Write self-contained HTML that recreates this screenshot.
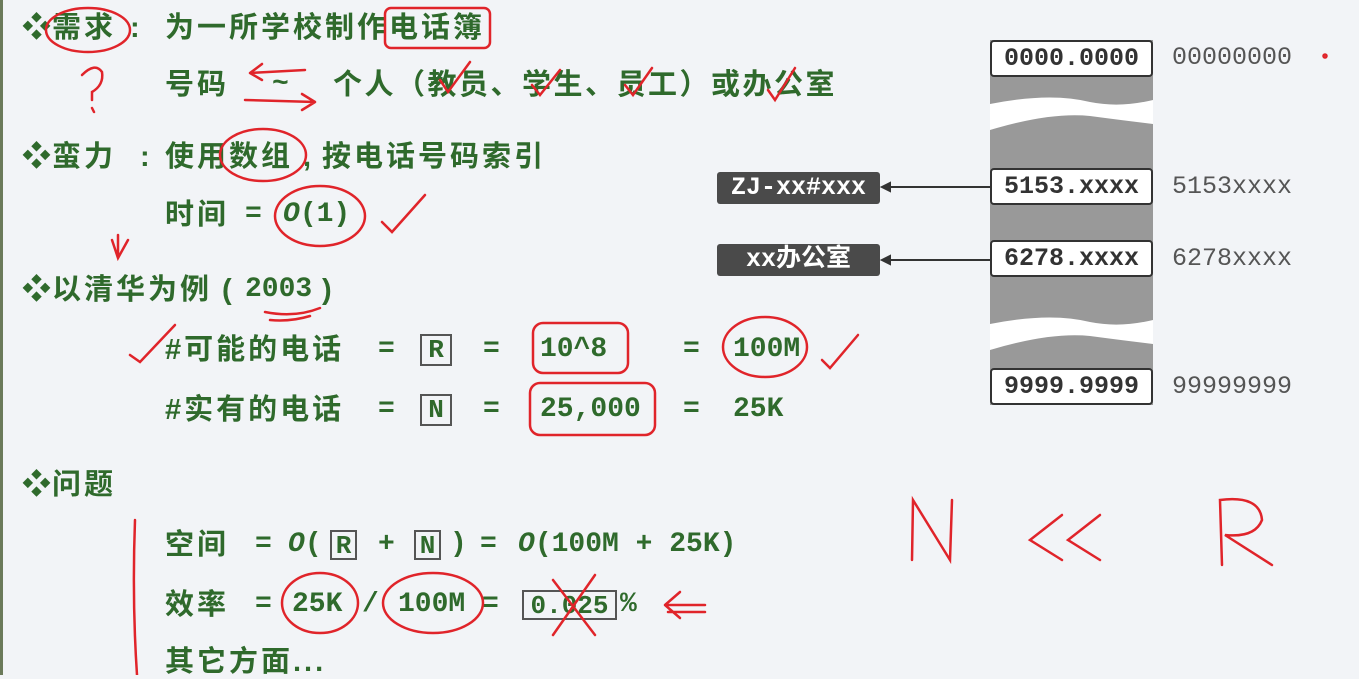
<!DOCTYPE html>
<html><head><meta charset="utf-8"><style>
body{margin:0;width:1359px;height:675px;background:#f2f4f7;position:relative;overflow:hidden;font-family:"Liberation Sans","Noto Sans CJK SC",sans-serif;}
.c,.m{position:absolute;color:#2f6a2c;font-weight:bold;white-space:nowrap;line-height:34px}
.c{font-family:"Liberation Sans","Noto Sans CJK SC",sans-serif;font-size:29px;letter-spacing:3px}
.m{font-family:"Liberation Mono",monospace;font-size:28px}
.bx{position:absolute;border:2px solid #555;box-sizing:border-box;color:#2f6a2c;font:bold 26px/28px "Liberation Mono",monospace;text-align:center}
.cell{position:absolute;left:990px;width:159px;height:33px;background:#fff;border:2px solid #333;border-radius:4px;font:bold 25px/33px "Liberation Mono",monospace;color:#333;text-align:center}
.num{position:absolute;left:1172px;font:25px/30px "Liberation Mono",monospace;color:#555}
.lab{position:absolute;left:717px;width:163px;height:32px;background:#4a4a4a;color:#fff;border-radius:3px;font:bold 25px/32px "Liberation Mono","Noto Sans CJK SC",monospace;text-align:center}
</style></head><body>
<div style="position:absolute;left:0;top:0;width:3px;height:675px;background:#6b7a5a"></div>
<div style="position:absolute;left:990px;top:40px;width:163px;height:365px;background:#999"></div>
<svg style="position:absolute;left:990px;top:90px" width="163" height="270"><path d="M0 14 Q60 2 100 12 Q130 18 163 10 L163 34 Q130 30 100 26 Q60 22 0 40Z" fill="#fff"/><path d="M0 234 Q60 222 100 232 Q130 238 163 230 L163 254 Q130 250 100 246 Q60 242 0 260Z" fill="#fff"/></svg>
<div class="cell" style="top:40px">0000.0000</div>
<div class="cell" style="top:168px">5153.xxxx</div>
<div class="cell" style="top:240px">6278.xxxx</div>
<div class="cell" style="top:368px">9999.9999</div>
<div class="num" style="top:43px">00000000</div>
<div class="num" style="top:172px">5153xxxx</div>
<div class="num" style="top:244px">6278xxxx</div>
<div class="num" style="top:372px">99999999</div>
<div class="lab" style="top:172px">ZJ-xx#xxx</div>
<div class="lab" style="top:244px">xx办公室</div>
<svg style="position:absolute;left:880px;top:175px" width="112" height="100"><g stroke="#333" stroke-width="2" fill="#333"><line x1="4" y1="12" x2="110" y2="12"/><path d="M2 12 L10 8 L10 16Z"/><line x1="4" y1="85" x2="110" y2="85"/><path d="M2 85 L10 81 L10 89Z"/></g></svg>

<div class="c" style="left:22px;top:11px">❖</div><div class="c" style="left:52px;top:11px">需求</div><div class="c" style="left:130px;top:11px">:</div>
<div class="c" style="left:165px;top:11px">为一所学校制作电话簿</div>
<div class="c" style="left:165px;top:68px">号码</div><div class="m" style="left:272px;top:68px">~</div>
<div class="c" style="left:333px;top:68px;letter-spacing:2.5px">个人（教员、学生、员工）或办公室</div>
<div class="c" style="left:22px;top:140px">❖</div><div class="c" style="left:52px;top:140px">蛮力</div><div class="c" style="left:140px;top:140px">:</div>
<div class="c" style="left:165px;top:140px">使用数组</div><div class="c" style="left:303px;top:140px">,</div><div class="c" style="left:322px;top:140px">按电话号码索引</div>
<div class="c" style="left:165px;top:198px">时间</div><div class="m" style="left:245px;top:198px">=</div><div class="m" style="left:283px;top:198px"><i>O</i>(1)</div>
<div class="c" style="left:22px;top:273px">❖</div><div class="c" style="left:52px;top:273px">以清华为例</div><div class="c" style="left:222px;top:273px">(</div><div class="m" style="left:245px;top:273px">2003</div><div class="c" style="left:322px;top:273px">)</div>
<div class="c" style="left:165px;top:333px">#可能的电话</div><div class="m" style="left:378px;top:333px">=</div><div class="bx" style="left:420px;top:334px;width:32px;height:32px">R</div><div class="m" style="left:483px;top:333px">=</div><div class="m" style="left:540px;top:333px">10^8</div><div class="m" style="left:683px;top:333px">=</div><div class="m" style="left:733px;top:333px">100M</div>
<div class="c" style="left:165px;top:393px">#实有的电话</div><div class="m" style="left:378px;top:393px">=</div><div class="bx" style="left:420px;top:394px;width:32px;height:32px">N</div><div class="m" style="left:483px;top:393px">=</div><div class="m" style="left:540px;top:393px">25,000</div><div class="m" style="left:683px;top:393px">=</div><div class="m" style="left:733px;top:393px">25K</div>
<div class="c" style="left:22px;top:468px">❖</div><div class="c" style="left:52px;top:468px">问题</div>
<div class="c" style="left:165px;top:528px">空间</div><div class="m" style="left:255px;top:528px">=</div><div class="m" style="left:288px;top:528px"><i>O</i>(</div><div class="bx" style="left:330px;top:530px;width:27px;height:30px">R</div><div class="m" style="left:378px;top:528px">+</div><div class="bx" style="left:414px;top:530px;width:27px;height:30px">N</div><div class="m" style="left:450px;top:528px">)</div><div class="m" style="left:480px;top:528px">=</div><div class="m" style="left:518px;top:528px"><i>O</i>(100M + 25K)</div>
<div class="c" style="left:165px;top:588px">效率</div><div class="m" style="left:255px;top:588px">=</div><div class="m" style="left:292px;top:588px">25K</div><div class="m" style="left:362px;top:588px">/</div><div class="m" style="left:398px;top:588px">100M</div><div class="m" style="left:482px;top:588px">=</div><div class="bx" style="left:522px;top:590px;width:95px;height:30px">0.025</div><div class="m" style="left:620px;top:588px">%</div>
<div class="c" style="left:165px;top:645px">其它方面...</div>

<svg style="position:absolute;left:0;top:0" width="1359" height="675" fill="none" stroke="#e0242a" stroke-width="2.5" stroke-linecap="round">
<ellipse cx="88" cy="30" rx="42" ry="22"/>
<rect x="385" y="8" width="105" height="40" rx="6"/>
<path d="M82 75 Q95 62 102 72 Q104 85 92 92 L92 100 M92 108 L94 112"/>
<path d="M250 73 L305 70 M250 73 L262 64 M250 73 L262 80 M245 100 L315 102 M315 102 L302 94 M315 102 L302 110"/>
<ellipse cx="263" cy="155" rx="43" ry="26"/>
<ellipse cx="320" cy="216" rx="45" ry="30"/>
<path d="M382 222 L392 232 L425 195"/>
<path d="M112 240 L118 258 L128 240 M118 258 L118 235"/>
<path d="M265 312 Q295 318 320 308 M270 320 Q290 322 310 316"/>
<path d="M130 355 L140 362 L175 325"/>
<rect x="533" y="323" width="95" height="50" rx="10"/>
<ellipse cx="765" cy="347" rx="42" ry="30"/>
<path d="M822 360 L830 368 L858 335"/>
<rect x="530" y="383" width="125" height="52" rx="10"/>
<path d="M135 520 Q132 600 137 675"/>
<ellipse cx="320" cy="603" rx="38" ry="30"/>
<ellipse cx="433" cy="603" rx="50" ry="30"/>
<path d="M553 580 L595 635 M595 575 L553 635"/>
<path d="M665 605 L705 605 M665 605 L680 592 M665 605 L680 618 M668 612 L705 612"/>
<path d="M912 560 L913 500 L950 560 L952 500"/>
<path d="M1062 515 L1030 540 L1062 560 M1100 515 L1068 540 L1100 560"/>
<path d="M1222 565 L1220 500 Q1260 495 1262 520 Q1255 538 1225 535 L1272 565"/>
<path d="M440 80 L448 92 L470 62 M532 85 L540 95 L560 70 M625 85 L633 95 L652 68 M768 90 L775 100 L795 68"/>
<circle cx="1325" cy="56" r="1.5"/>
</svg>
</body></html>
